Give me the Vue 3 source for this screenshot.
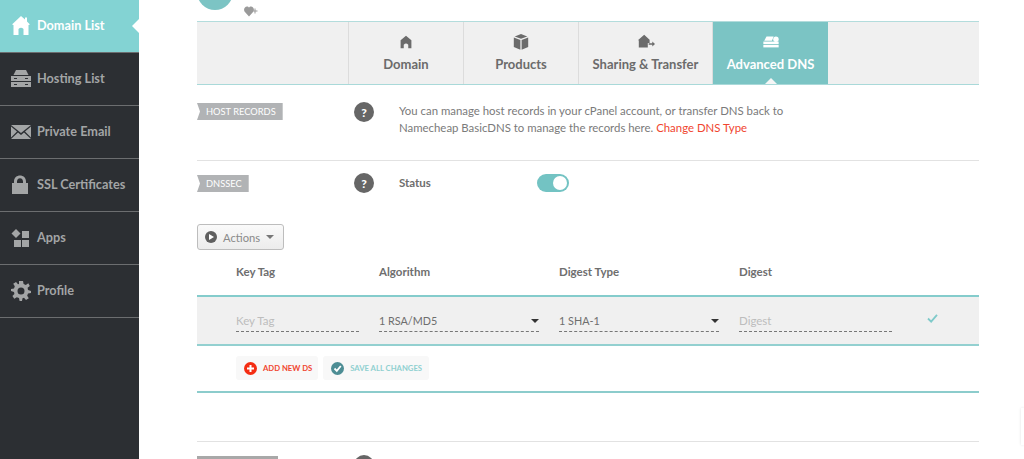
<script setup>
const nav = [
  { label: 'Domain List', icon: 'home', active: true },
  { label: 'Hosting List', icon: 'server' },
  { label: 'Private Email', icon: 'mail' },
  { label: 'SSL Certificates', icon: 'lock' },
  { label: 'Apps', icon: 'apps' },
  { label: 'Profile', icon: 'gear' },
];
const tabs = [
  { label: 'Domain', icon: 'home' },
  { label: 'Products', icon: 'box' },
  { label: 'Sharing & Transfer', icon: 'share' },
  { label: 'Advanced DNS', icon: 'dns', active: true },
];
</script>

<template>
  <div class="page">
    <aside class="sidebar">
      <a v-for="item in nav" :key="item.label" class="nav-item" :class="{ active: item.active }">
        <span class="nav-icon">
          <svg viewBox="0 0 20 20" width="20" height="20" fill="currentColor">
            <path v-if="item.icon === 'home'" d="M10 0 L14 3.5 V1.5 H16 V5.5 L18.5 8 V9 L17.5 9 V19 H12.5 V13 Q10 10.5 7.5 13 V19 H2.5 V9 H1.5 V8 Z" />
            <template v-else-if="item.icon === 'server'">
              <path d="M5 1 H15 L17.5 6 H2.5 Z" />
              <path fill-rule="evenodd" d="M0 7 H20 V12 H0 Z M3 9 V10 H6 V9 Z M14 9 V10 H17 V9 Z" />
              <path fill-rule="evenodd" d="M0 13 H20 V18 H0 Z M3 15 V16 H6 V15 Z M14 15 V16 H17 V15 Z" />
            </template>
            <template v-else-if="item.icon === 'mail'">
              <path d="M0 3 H20 L10 11 Z" />
              <path d="M0 4.5 L6 9.5 L0 15.5 Z M20 4.5 L14 9.5 L20 15.5 Z" />
              <path d="M7 10.5 L10 13 L13 10.5 L20 17 H0 Z" />
            </template>
            <path v-else-if="item.icon === 'lock'" fill-rule="evenodd" d="M3 8 V6.5 C3 -1.5 15 -1.5 15 6.5 V8 H17 V19 H1 V8 Z M6 8 H12 V6.5 C12 2 6 2 6 6.5 Z" />
            <template v-else-if="item.icon === 'apps'">
              <path d="M5 1 L9.5 5.5 L5 10 L0.5 5.5 Z" />
              <rect x="11" y="3" width="7" height="7" />
              <rect x="3" y="12" width="7" height="7" />
              <rect x="11" y="12" width="7" height="7" />
            </template>
            <path v-else fill-rule="evenodd" d="M8 0 H12 L12.6 3 L14.8 3.9 L17.3 2.2 L18.8 5 L16.6 6.8 L17 9 L20 10 L20 12 L17 12.6 L16.2 14.8 L17.8 17.3 L15 19 L13 16.8 L11.5 17.2 L11 20 H8.6 L8 17 L5.8 16.2 L3.3 17.8 L1.4 15 L3.4 13 L3 11 L0 10 V8 L3 7.4 L3.8 5.2 L2.2 2.7 L5 1 L7 3.2 L8 3 Z M10 6.5 A3.5 3.5 0 1 0 10 13.5 A3.5 3.5 0 1 0 10 6.5 Z" />
          </svg>
        </span>
        <span>{{ item.label }}</span>
      </a>
    </aside>

    <main class="content">
      <div class="domain-head">
        <span class="avatar"></span>
        <svg class="fav" viewBox="0 0 14 11" width="14" height="11" fill="#9a9a9a">
          <path d="M5 10.5 L0.5 5.5 C-0.8 3 1 0.5 3 0.5 C4 0.5 4.6 1 5 1.6 C5.4 1 6 0.5 7 0.5 C9 0.5 10.8 3 9.5 5.5 Z" />
          <path d="M10.5 2.5 H11.5 V4.5 H13.5 V5.5 H11.5 V7.5 H10.5 V5.5 H9.5 V4.5 H10.5 Z" />
        </svg>
      </div>

      <nav class="tabs">
        <div class="tabs-spacer"></div>
        <a v-for="tab in tabs" :key="tab.label" class="tab" :class="{ active: tab.active }">
          <svg viewBox="0 0 20 20" width="20" height="20" fill="currentColor" class="tab-icon">
            <path v-if="tab.icon === 'home'" d="M10 3 L16 8 V17 H12.5 V13 Q10 10.5 7.5 13 V17 H4 V8 Z" />
            <template v-else-if="tab.icon === 'box'">
              <path d="M10 1 L17 3.8 L10 6.5 L3 3.8 Z" />
              <path d="M2 5 L9.3 7.8 V18.5 L2 15.5 Z" />
              <path d="M18 5 L10.7 7.8 V18.5 L18 15.5 Z" />
            </template>
            <template v-else-if="tab.icon === 'share'">
              <path d="M8 2 L14 7.5 V11 H12 V16 H2 V8 H1 Z" />
              <path d="M13 11.5 H17 V9.5 L20 12.2 L17 15 V13 H13 Z" />
            </template>
            <template v-else>
              <path d="M5 4 H13 L11 8.5 H2.5 Z" />
              <circle cx="15.5" cy="7" r="3" />
              <rect x="1.5" y="9.5" width="17" height="2.8" />
              <rect x="1.5" y="13.2" width="17" height="2.8" />
            </template>
          </svg>
          <span>{{ tab.label }}</span>
        </a>
      </nav>

      <section class="section host">
        <div class="col-tag"><span class="tag">HOST RECORDS</span></div>
        <div class="col-help"><span class="help">?</span></div>
        <p class="host-text">
          You can manage host records in your cPanel account, or transfer DNS back to<br />
          Namecheap BasicDNS to manage the records here. <a class="link">Change DNS Type</a>
        </p>
      </section>

      <section class="section dnssec">
        <div class="col-tag"><span class="tag">DNSSEC</span></div>
        <div class="col-help"><span class="help">?</span></div>
        <span class="status">Status</span>
        <span class="toggle"><span class="knob"></span></span>
      </section>

      <button class="actions">
        <span class="play"></span>
        <span>Actions</span>
        <span class="caret"></span>
      </button>

      <div class="ds-grid ds-head">
        <span>Key Tag</span>
        <span>Algorithm</span>
        <span>Digest Type</span>
        <span>Digest</span>
      </div>

      <div class="ds-grid ds-row">
        <span class="field placeholder">Key Tag</span>
        <span class="field select">1 RSA/MD5<i class="caret dark"></i></span>
        <span class="field select">1 SHA-1<i class="caret dark"></i></span>
        <span class="field placeholder">Digest</span>
        <svg class="check" viewBox="0 0 12 10" width="11" height="9" fill="none" stroke="#7fcaca" stroke-width="2">
          <path d="M1 5 L4.5 8.5 L11 1" />
        </svg>
      </div>

      <div class="ds-buttons">
        <button class="ds-btn add">
          <span class="round red">
            <svg viewBox="0 0 13 13" width="13" height="13" fill="#fff"><path d="M5.5 3 H7.5 V5.5 H10 V7.5 H7.5 V10 H5.5 V7.5 H3 V5.5 H5.5 Z" /></svg>
          </span>
          ADD NEW DS
        </button>
        <button class="ds-btn save">
          <span class="round teal">
            <svg viewBox="0 0 13 13" width="13" height="13" fill="none" stroke="#fff" stroke-width="1.8"><path d="M3.5 6.5 L5.8 8.8 L9.8 4" /></svg>
          </span>
          SAVE ALL CHANGES
        </button>
      </div>

      <section class="next">
        <div class="col-tag"><span class="tag blank"></span></div>
        <div class="col-help"><span class="help"></span></div>
      </section>
    </main>
    <div class="chat-edge"></div>
  </div>
</template>

<style>
html, body {
  margin: 0;
  background: #fff;
  overflow: hidden;
}
</style>

<style scoped>
.page {
  display: flex;
  height: 459px;
  overflow: hidden;
  font-family: Lato, "Open Sans", sans-serif;
  color: #666;
  position: relative;
}
.sidebar {
  width: 139px;
  flex: none;
  background: #2c2f33;
}
.nav-item {
  display: flex;
  align-items: center;
  height: 52px;
  box-sizing: content-box;
  border-bottom: 1px solid #6c6e70;
  padding-left: 11px;
  gap: 6px;
  font-size: 12.7px;
  font-weight: 700;
  color: #a3a5a6;
  position: relative;
}
.nav-item > span:last-child {
  margin-top: -2px;
}
.nav-icon {
  display: flex;
  width: 20px;
  height: 20px;
}
.nav-item.active {
  background: #83d3d3;
  color: #fff;
}
.nav-item.active::after {
  content: "";
  position: absolute;
  right: 0;
  top: 19px;
  border-top: 7px solid transparent;
  border-bottom: 7px solid transparent;
  border-right: 7px solid #fff;
}
.content {
  width: 782px;
  margin-left: 58px;
  flex: none;
}
.domain-head {
  height: 21px;
  position: relative;
}
.avatar {
  position: absolute;
  left: 0;
  top: -26px;
  width: 36px;
  height: 36px;
  border-radius: 50%;
  background: #7cc4c4;
}
.fav {
  position: absolute;
  left: 47px;
  top: 6px;
}
.tabs {
  display: flex;
  height: 62px;
  background: #f0f0f0;
  border-top: 1px solid #b3dcdc;
  border-bottom: 1px solid #a9d9d9;
}
.tabs-spacer {
  width: 152px;
  box-sizing: border-box;
  border-right: 1px solid #dcdcdc;
}
.tab {
  width: 115px;
  flex: none;
  border-right: 1px solid #dcdcdc;
  display: flex;
  flex-direction: column;
  align-items: center;
  padding-top: 11px;
  font-size: 13px;
  font-weight: 700;
  color: #6b6b6b;
  gap: 5px;
  box-sizing: border-box;
  position: relative;
}
.tab:nth-of-type(3) {
  width: 134px;
}
.tab.active {
  background: #7bc4c4;
  color: #fff;
  border-right: none;
}
.tab.active::after {
  content: "";
  position: absolute;
  left: 50%;
  bottom: 0;
  margin-left: -6px;
  border-left: 6px solid transparent;
  border-right: 6px solid transparent;
  border-bottom: 6px solid #f6f6f6;
}
.tab-icon {
  width: 18px;
  height: 18px;
}
.section {
  display: flex;
  position: relative;
}
.col-tag {
  width: 157px;
  flex: none;
  display: flex;
  align-items: flex-start;
}
.col-help {
  width: 45px;
  flex: none;
}
.tag {
  display: block;
  height: 17px;
  line-height: 17px;
  padding: 0 7px 0 9px;
  font-size: 9.3px;
  color: #fff;
  background: #b1b3b5;
  clip-path: polygon(0 0, 100% 0, 100% 100%, 0 100%, 3px 50%);
}
.help {
  display: flex;
  align-items: center;
  justify-content: center;
  width: 20px;
  height: 20px;
  border-radius: 50%;
  background: #666;
  color: #fff;
  font-size: 12px;
  font-weight: 900;
}
.host {
  padding-top: 17px;
  height: 76px;
  box-sizing: border-box;
  border-bottom: 1px solid #e2e2e2;
}
.host .tag {
  margin-top: 1px;
}
.host-text {
  margin: 1px 0 0;
  font-size: 11.4px;
  line-height: 16.5px;
  color: #7a7a7a;
}
.link {
  color: #f0452f;
}
.dnssec {
  padding-top: 12px;
  height: 63px;
  box-sizing: border-box;
  align-items: flex-start;
}
.dnssec .tag {
  margin-top: 2px;
}
.status {
  width: 138px;
  font-size: 11.5px;
  font-weight: 700;
  line-height: 18px;
  margin-top: 1px;
  color: #6e6e6e;
}
.toggle {
  width: 32px;
  height: 18px;
  margin-top: 1px;
  border-radius: 9px;
  background: #73c3c3;
  display: flex;
  justify-content: flex-end;
  align-items: center;
  padding-right: 2px;
  box-sizing: border-box;
}
.knob {
  width: 14px;
  height: 14px;
  border-radius: 50%;
  background: #fff;
}
.actions {
  display: flex;
  align-items: center;
  width: 87px;
  height: 26px;
  padding: 0 0 0 7px;
  gap: 6px;
  background: linear-gradient(#fafafa, #ececec);
  border: 1px solid #bdbdbd;
  border-radius: 3px;
  font: 11.2px Lato, "Open Sans", sans-serif;
  color: #8a8a8a;
  box-sizing: border-box;
}
.play {
  width: 12px;
  height: 12px;
  border-radius: 50%;
  background: #5f5f5f;
  position: relative;
}
.play::after {
  content: "";
  position: absolute;
  left: 4px;
  top: 3px;
  border-left: 5px solid #fff;
  border-top: 3px solid transparent;
  border-bottom: 3px solid transparent;
}
.caret {
  width: 0;
  height: 0;
  border-left: 4px solid transparent;
  border-right: 4px solid transparent;
  border-top: 4px solid #777;
}
.ds-grid {
  display: grid;
  grid-template-columns: 123px 160px 160px 153px;
  column-gap: 20px;
  padding-left: 39px;
}
.ds-head {
  height: 45px;
  padding-bottom: 2px;
  box-sizing: border-box;
  align-items: center;
  font-size: 11.5px;
  font-weight: 700;
  color: #6e6e6e;
}
.ds-row {
  height: 47px;
  background: #f0f0f0;
  border-top: 2px solid #84cccc;
  border-bottom: 2px solid #93d0d0;
  align-items: center;
  position: relative;
}
.field {
  height: 19px;
  margin-top: 2px;
  line-height: 18px;
  font-size: 11.5px;
  color: #6e6e6e;
  border-bottom: 1px dashed #777;
  display: flex;
  align-items: center;
  justify-content: space-between;
}
.field.select {
  font-size: 10.8px;
}
.placeholder {
  color: #bdbdbd;
}
.caret.dark {
  border-top-color: #333;
}
.check {
  position: absolute;
  left: 730px;
  top: 17px;
}
.ds-buttons {
  display: flex;
  gap: 5px;
  padding: 10px 0 11px 39px;
  border-bottom: 2px solid #8ccccc;
}
.ds-btn {
  display: flex;
  align-items: center;
  height: 24px;
  padding: 0 7px 0 8px;
  gap: 6px;
  background: #f8f8f8;
  border: none;
  border-radius: 3px;
  font: 700 7.7px Lato, "Open Sans", sans-serif;
  white-space: nowrap;
}
.add {
  color: #f0452f;
  padding-right: 6px;
}
.save {
  color: #8fd0d0;
}
.round {
  width: 13px;
  height: 13px;
  border-radius: 50%;
  display: flex;
}
.round.red {
  background: #f42c12;
}
.round.teal {
  background: #4d8d94;
}
.next {
  display: flex;
  margin-top: 48px;
  padding-top: 13px;
  border-top: 1px solid #e2e2e2;
}
.next .tag {
  margin-top: 1px;
}
.tag.blank {
  width: 81px;
  padding: 0;
  background: #a8a8a8;
  clip-path: none;
}
.chat-edge {
  position: absolute;
  right: 0;
  top: 408px;
  width: 3px;
  height: 37px;
  background: #fff;
  box-shadow: 0 0 3px rgba(0, 0, 0, 0.12);
}
</style>
